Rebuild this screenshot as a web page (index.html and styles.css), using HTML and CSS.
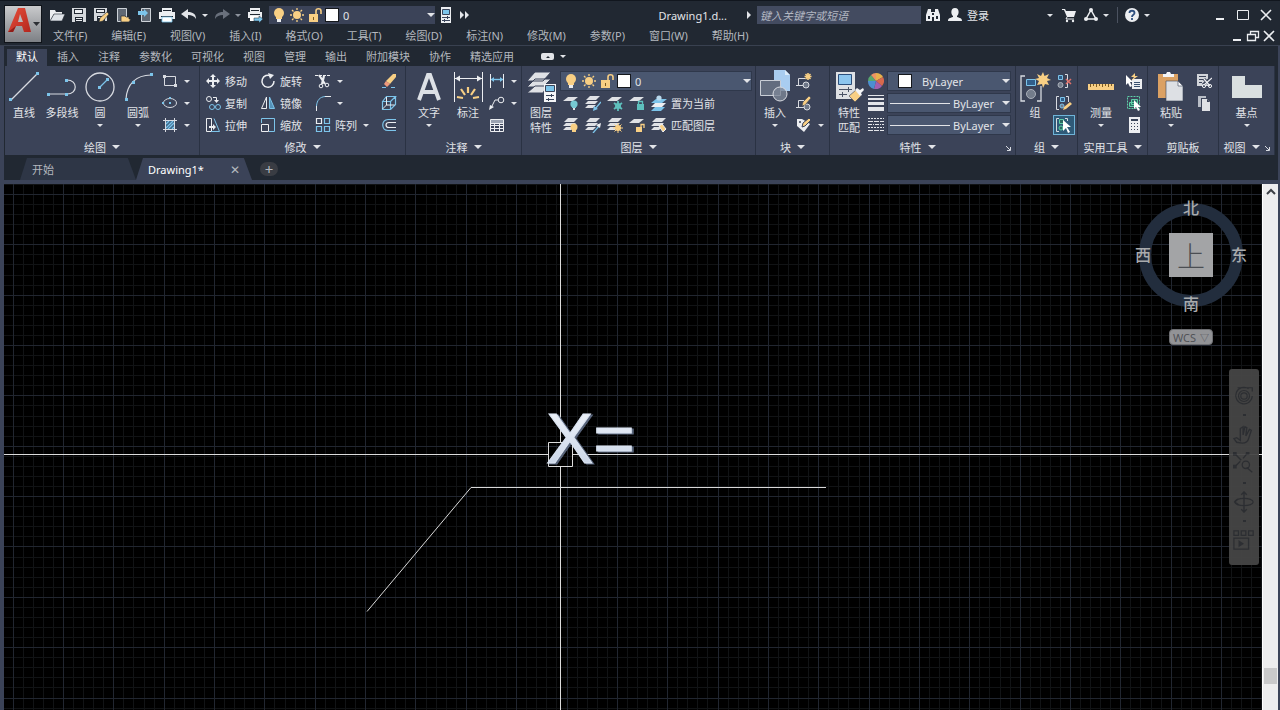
FILE: index.html
```html
<!DOCTYPE html>
<html lang="zh-CN">
<head>
    <meta charset="UTF-8">
    <meta name="viewport" content="width=device-width, initial-scale=1.0">
    <title>Drawing1.dwg</title>
    <link rel="stylesheet" href="styles.css">
</head>
<body>

    <!-- ICON SPRITE -->
    <svg class="sprite" aria-hidden="true">
        <defs>
            <linearGradient id="g-red" x1="0" y1="0" x2="1" y2="1">
                <stop offset="0" stop-color="#e8503c"/><stop offset="1" stop-color="#b3261e"/>
            </linearGradient>
            <linearGradient id="g-text" x1="0" y1="0" x2="0" y2="1">
                <stop offset="0" stop-color="#f4f7fc"/><stop offset="1" stop-color="#c3d0e4"/>
            </linearGradient>
        </defs>
        <symbol id="i-open" viewBox="0 0 16 16"><path fill="#eceef1" d="M1 14V3h5l1 2h6v2H5z"/><path fill="#dfe3e8" stroke="#222933" stroke-width=".6" d="M5 7h11l-3 7H1z"/></symbol>
        <symbol id="i-save" viewBox="0 0 16 16"><path fill="#d5d8dc" d="M1 1h14v14H1z"/><path fill="#222933" d="M3 2h9v5H3zM4 10h8v5H4z"/><path fill="#eceef1" d="M4 3h7v3H4zM5 11h6v1H5zM5 13h6v1H5z"/></symbol>
        <symbol id="i-saveas" viewBox="0 0 16 16"><path fill="#d5d8dc" d="M1 1h13v13H1z"/><path fill="#222933" d="M3 2h9v4H3zM4 9h8v5H4z"/><path fill="#eceef1" d="M4 3h7v2H4zM5 10h4v1H5z"/><path fill="#f8cf84" stroke="#222933" stroke-width=".6" d="M6 15l1-4 7-6 2 2-6 7z"/></symbol>
        <symbol id="i-webopen" viewBox="0 0 16 16"><path fill="#606873" stroke="#cdd2d8" d="M2.500 1.500h9v13h-9z"/><path fill="#f8cf84" stroke="#222933" stroke-width=".7" d="M6 15V9h4l1 1h3v2h2l-2 3z"/></symbol>
        <symbol id="i-websave" viewBox="0 0 16 16"><path fill="#606873" stroke="#cdd2d8" d="M4.500 1.500h9v13h-9z"/><path fill="#7cc4ea" d="M1 4h6V2l4 4-4 4V8H1z"/></symbol>
        <symbol id="i-print" viewBox="0 0 16 16"><path fill="#eceef1" d="M3 1h10v4H3zM0 5h16v7H0z"/><path fill="#222933" d="M2 9h12v1H2zM4 3h8v1H4z"/><path fill="#fff" stroke="#7cc4ea" stroke-width=".8" d="M3 10h10v5H3z"/></symbol>
        <symbol id="i-batch" viewBox="0 0 16 16"><path fill="#eceef1" d="M3 1h10v4H3zM1 5h14v6H1z"/><path fill="#222933" d="M3 7h10v1H3zM4 3h8v1H4z"/><path fill="#fff" d="M3 9h10v5H3z"/><path fill="#7cc4ea" stroke="#222933" stroke-width=".5" d="M7 11h5V9l4 3-4 4v-2H7z"/></symbol>
        <symbol id="i-undo" viewBox="0 0 16 16"><path fill="currentColor" d="M0 7l7-5v3c5 0 8 2 8 7-2-3-4-4-8-4v4z"/></symbol>
        <symbol id="i-redo" viewBox="0 0 16 16"><path fill="currentColor" d="M16 7L9 2v3c-5 0-8 2-8 7 2-3 4-4 8-4v4z"/></symbol>
        <symbol id="i-bulb" viewBox="0 0 16 16"><circle cx="8" cy="6" r="5" fill="#f8cf84"/><path fill="#f8cf84" d="M5 8h6v4H5z"/><path fill="#eceef1" d="M6 12h4v3H6z"/></symbol>
        <symbol id="i-sun" viewBox="0 0 16 16"><circle cx="8" cy="8" r="4" fill="#f8cf84"/><path stroke="#f8cf84" stroke-width="1.300" d="M8 1v2M8 13v2M1 8h2M13 8h2M3 3l1.500 1.500M11.500 11.500L13 13M13 3l-1.500 1.500M4.500 11.500L3 13"/></symbol>
        <symbol id="i-lock" viewBox="0 0 16 16"><path fill="#f8cf84" d="M2 7h9v8H2z"/><path fill="none" stroke="#f8cf84" stroke-width="1.600" d="M9 7V4c0-3 5-3 5 0v3"/><path stroke="#7a5a20" d="M6.500 10v3"/></symbol>
        <symbol id="i-sheet" viewBox="0 0 16 16"><path fill="#eceef1" d="M3 0h10v16H3z"/><path fill="#7cc4ea" stroke="#39445a" d="M4.500 2.500h7v5h-7z"/><path stroke="#39445a" d="M4 10.500h8M4 13.500h8M9.500 9v3M6.500 12v3"/></symbol>
        <symbol id="i-more" viewBox="0 0 16 16"><path fill="#e4e6ea" d="M3 4l4 4-4 4zM8 4l4 4-4 4z"/></symbol>
        <symbol id="i-find" viewBox="0 0 16 16"><path fill="#eceef1" d="M3 2h3v3h4V2h3l2 6v6H9v-4H7v4H1V8z"/><path fill="#222933" d="M3 9h2v3H3zM11 9h2v3h-2zM7 6h2v2H7z"/></symbol>
        <symbol id="i-user" viewBox="0 0 16 16"><path fill="#eceef1" d="M8 1c5 0 4 7 2 8v1c3 1 5 1 5 4H1c0-3 2-3 5-4V9C4 8 3 1 8 1z"/></symbol>
        <symbol id="i-cart" viewBox="0 0 16 16"><path fill="#eceef1" d="M1 2h3l1 2h10l-2 6H6L3 3H1z"/><path stroke="#eceef1" fill="none" d="M6 10l-1 2h8"/><circle cx="6" cy="14" r="1.200" fill="#eceef1"/><circle cx="12" cy="14" r="1.200" fill="#eceef1"/></symbol>
        <symbol id="i-a360" viewBox="0 0 16 16"><path fill="none" stroke="#eceef1" stroke-width="1.500" d="M8 3l5 9H3z"/><circle cx="8" cy="3" r="2" fill="#eceef1"/><circle cx="3" cy="12" r="2" fill="#eceef1"/><circle cx="13" cy="12" r="2" fill="#eceef1"/></symbol>
        <symbol id="i-help" viewBox="0 0 16 16"><circle cx="8" cy="8" r="7" fill="#eceef1"/><path fill="none" stroke="#2f5080" stroke-width="1.800" d="M5.500 6c0-3 5-3 5 0 0 2-2.500 1.500-2.500 4M8 11v2"/></symbol>
        <symbol id="i-min" viewBox="0 0 16 16"><path fill="#eceef1" d="M4 11h8v2H4z"/></symbol>
        <symbol id="i-max" viewBox="0 0 16 16"><path fill="none" stroke="#eceef1" d="M2.500 3.500h11v9h-11z"/></symbol>
        <symbol id="i-restore" viewBox="0 0 16 16"><path fill="none" stroke="#eceef1" stroke-width="1.300" d="M5.500 6V3.500h8v6H11M2.500 6.500h8v6h-8z"/></symbol>
        <symbol id="i-close" viewBox="0 0 16 16"><path stroke="#eceef1" stroke-width="1.600" d="M3 3l10 10M13 3L3 13"/></symbol>
        <symbol id="i-launch" viewBox="0 0 8 8"><path fill="none" stroke="#d8dbe1" d="M2 2l4 4M6.500 3v3.500H3"/></symbol>

        <!-- draw -->
        <symbol id="i-line" viewBox="0 0 32 32"><path stroke="#d8dbe1" stroke-width="1.200" d="M3 30L29 4"/><path fill="#7cc4ea" d="M1 28h3v3H1zM28 2h3v3h-3z"/></symbol>
        <symbol id="i-pline" viewBox="0 0 32 32"><path fill="none" stroke="#d8dbe1" stroke-width="1.200" d="M3 24h18c11 0 11-14 0-14"/><path fill="#7cc4ea" d="M1 23h3v3H1zM19 23h3v3h-3zM19 9h3v3h-3z"/></symbol>
        <symbol id="i-circle" viewBox="0 0 32 32"><circle cx="16" cy="17" r="14" fill="none" stroke="#d8dbe1" stroke-width="1.300"/><path stroke="#7cc4ea" stroke-width="1.300" d="M16 17l7-7"/><path fill="#7cc4ea" d="M14 16h3v3h-3zM22 8h3v3h-3z"/></symbol>
        <symbol id="i-arc" viewBox="0 0 32 32"><path fill="none" stroke="#d8dbe1" stroke-width="1.200" d="M4 29C5 14 14 5 29 5"/><path fill="#7cc4ea" d="M3 28h3v3H3zM10 11h3v3h-3zM28 3h3v3h-3z"/></symbol>
        <symbol id="i-rect" viewBox="0 0 16 16"><path fill="none" stroke="#d8dbe1" d="M2.500 3.500h11v9h-11z"/><path fill="#d8dbe1" d="M1 2h3v3H1zM12 11h3v3h-3z"/></symbol>
        <symbol id="i-ellipse" viewBox="0 0 16 16"><ellipse cx="8" cy="8" rx="6.500" ry="4.500" fill="none" stroke="#d8dbe1"/><path fill="#7cc4ea" d="M7 7h2v2H7zM7 2h2v2H7zM0 7h2v2H0z"/></symbol>
        <symbol id="i-hatch" viewBox="0 0 16 16"><path fill="#41698a" d="M4 4h8v8H4z"/><path stroke="#7cc4ea" stroke-width="1.200" d="M4 7l3-3M4 11l7-7M6 12l6-6M10 12l2-2"/><path fill="none" stroke="#d8dbe1" d="M3.500 1v14M12.500 1v14M1 3.500h14M1 12.500h14"/></symbol>

        <!-- modify -->
        <symbol id="i-move" viewBox="0 0 16 16"><path fill="#eceef1" d="M8 1l3 3H9v3h3V5l3 3-3 3V9H9v3h2l-3 3-3-3h2V9H4v2L1 8l3-3v2h3V4H5z"/></symbol>
        <symbol id="i-copy" viewBox="0 0 16 16"><circle cx="4" cy="4" r="2.500" fill="none" stroke="#eceef1"/><circle cx="7" cy="12" r="2.500" fill="none" stroke="#7cc4ea"/><circle cx="13" cy="12" r="2.500" fill="none" stroke="#7cc4ea"/><path fill="none" stroke="#eceef1" d="M8 2.500h3.500V6"/><path fill="#eceef1" d="M9 5h5l-2.500 3z"/></symbol>
        <symbol id="i-stretch" viewBox="0 0 16 16"><path fill="none" stroke="#eceef1" d="M1.500 1.500h5v13h-5z"/><path fill="none" stroke="#7cc4ea" d="M9 1.500l5.500 13H6"/><path fill="#eceef1" d="M4 9h4V7l3 3-3 3v-2H4z"/></symbol>
        <symbol id="i-rotate" viewBox="0 0 16 16"><path fill="none" stroke="#eceef1" stroke-width="1.500" d="M11 3a6 6 0 1 0 3 5"/><path fill="#eceef1" d="M8 0l6 2-4 4z"/></symbol>
        <symbol id="i-mirror" viewBox="0 0 16 16"><path fill="none" stroke="#eceef1" d="M6.500 2v11.500h-5z"/><path fill="#5591b8" stroke="#7cc4ea" d="M9.500 2v11.500h5z"/></symbol>
        <symbol id="i-scale" viewBox="0 0 16 16"><path fill="none" stroke="#7cc4ea" d="M1.500 6V1.500h13v13H9"/><path fill="none" stroke="#eceef1" d="M1.500 7.500h7v7h-7z"/></symbol>
        <symbol id="i-trim" viewBox="0 0 16 16"><path stroke="#eceef1" stroke-dasharray="3 1" d="M0 2.500h16"/><path stroke="#eceef1" stroke-width="2.200" d="M4 2l6 9M9 3L7 11"/><circle cx="6" cy="13" r="1.800" fill="none" stroke="#eceef1"/><circle cx="12" cy="12" r="1.800" fill="none" stroke="#eceef1"/></symbol>
        <symbol id="i-fillet" viewBox="0 0 16 16"><path fill="none" stroke="#7cc4ea" d="M1.500 11C2 5 5 2 10 1.500"/><path stroke="#eceef1" d="M1.500 11v5M10 1.500h6"/></symbol>
        <symbol id="i-array" viewBox="0 0 16 16"><path fill="none" stroke="#7cc4ea" stroke-width="1.200" d="M9.500 1.500h5v5h-5zM1.500 9.500h5v5h-5zM9.500 9.500h5v5h-5z"/><path fill="none" stroke="#eceef1" stroke-width="1.200" d="M1.500 1.500h5v5h-5z"/></symbol>
        <symbol id="i-erase" viewBox="0 0 16 16"><path fill="#f8cf84" d="M12 1h3v3l-6 7-4-3z"/><path fill="#ee9a7c" d="M5 8l4 3-3 3-3-3z"/><path stroke="#7cc4ea" d="M1 14.500h4M10 14.500h4"/></symbol>
        <symbol id="i-explode" viewBox="0 0 16 16"><path fill="none" stroke="#7cc4ea" stroke-width="1.200" d="M1.500 6.500h8v8h-8zM1.500 6.500l4-5h9l-5 5M14.500 1.500v8l-5 5"/><path fill="none" stroke="#eceef1" d="M5.500 2v8h8M5.500 10l-4 4"/></symbol>
        <symbol id="i-offset" viewBox="0 0 16 16"><path fill="none" stroke="#7cc4ea" stroke-width="1.200" d="M15 2.500H7c-7 0-7 11 0 11h8"/><path fill="none" stroke="#eceef1" stroke-width="1.200" d="M15 5.500H8c-4 0-4 5 0 5h7"/></symbol>

        <!-- annotate -->
        <symbol id="i-text" viewBox="0 0 32 32"><path fill="none" stroke="#dde1e6" stroke-width="4" d="M6 30L15 5h2l9 25M9 22h14"/></symbol>
        <symbol id="i-dim" viewBox="0 0 32 32"><path fill="none" stroke="#eceef1" d="M2.500 2v30M30.500 2v30M3 8.500h27"/><path fill="#eceef1" d="M3 8.500l5-3v6zM30 8.500l-5-3v6z"/><path stroke="#f8cf84" stroke-width="2.200" d="M16 17v6M9 19l4 6M23 19l-4 6M5 27l6 1M27 27l-6 1"/></symbol>
        <symbol id="i-linear" viewBox="0 0 16 16"><path stroke="#7cc4ea" stroke-width="1.400" d="M2 6.500h12"/><path stroke="#eceef1" d="M1.500 1v14M14.500 1v14"/><path fill="#7cc4ea" d="M2 6.500L5 4v5zM14 6.500L11 4v5z"/></symbol>
        <symbol id="i-leader" viewBox="0 0 16 16"><circle cx="12" cy="5" r="2.800" fill="none" stroke="#eceef1"/><path fill="none" stroke="#eceef1" d="M9 5H6l-4 8"/><path fill="#eceef1" d="M0 15l1-5 4 2z"/></symbol>
        <symbol id="i-table" viewBox="0 0 16 16"><path fill="none" stroke="#eceef1" d="M1.500 2.500h13v12h-13zM1 6.500h14M1 8.500h14M1 11.500h14M5.500 6v8M10.500 6v8"/><path fill="#9aa2b0" d="M2 3h12v3H2z"/></symbol>

        <!-- layers -->
        <symbol id="i-layerprop" viewBox="0 0 32 32"><path fill="#dfe1e5" d="M10 2h16l-8 9H2zM10 9h16l-8 8H2z" stroke="#3b4358"/><path fill="#dfe1e5" stroke="#3b4358" d="M10 16h12l-4 7H2z"/><path fill="#f4f5f7" d="M19 14h12v18H19z"/><path fill="#7cc4ea" stroke="#39445a" d="M20.500 15.500h9v6h-9z"/><path stroke="#39445a" d="M21 25.500h8M21 29.500h8M26.500 24v3M23.500 28v3"/></symbol>
        <symbol id="i-l1" viewBox="0 0 16 16"><path fill="#dfe1e5" d="M5 2h10l-5 4H0z"/></symbol>
        <symbol id="i-l3" viewBox="0 0 16 16"><path fill="#dfe1e5" d="M5 1h10l-4 4H1zM3 6h10l-3 3H0zM3 10h8l-3 3H0z"/></symbol>
        <symbol id="i-loff" viewBox="0 0 16 16"><use href="#i-l1"/><circle cx="11" cy="9" r="3.600" fill="#76c9d3"/><path fill="#76c9d3" d="M9 11h4v2H9z"/><path fill="#dfe1e5" d="M10 13h2v2h-2z"/></symbol>
        <symbol id="i-liso" viewBox="0 0 16 16"><use href="#i-l3"/><path stroke="#7cc4ea" stroke-width="1.300" d="M16 7l-6 7"/><path fill="#7cc4ea" d="M8 16l1-5 4 3z"/></symbol>
        <symbol id="i-lfrz" viewBox="0 0 16 16"><use href="#i-l1"/><path stroke="#5ec0bd" stroke-width="1.800" d="M11 6v10M7 8l8 6M15 8l-8 6"/><circle cx="11" cy="11" r="3" fill="#5ec0bd"/></symbol>
        <symbol id="i-llck" viewBox="0 0 16 16"><use href="#i-l1"/><path fill="#5ec0bd" d="M8 9h7v6H8z"/><path fill="none" stroke="#5ec0bd" stroke-width="1.300" d="M9.500 9V6.500h4V9"/></symbol>
        <symbol id="i-lcur" viewBox="0 0 16 16"><path fill="#7cc4ea" d="M5 4h11l-5 4H0zM4 12h10l-4 4H0z"/><path fill="#eceef1" d="M4 8h11l-4 4H0z"/><circle cx="8" cy="3" r="2.600" fill="#b9d8ec"/></symbol>
        <symbol id="i-lon" viewBox="0 0 16 16"><use href="#i-l3"/><circle cx="11" cy="10" r="3.500" fill="#f8cf84"/><path fill="#f8cf84" d="M9 12h4v3H9z"/></symbol>
        <symbol id="i-luniso" viewBox="0 0 16 16"><use href="#i-l3"/><path stroke="#7cc4ea" stroke-width="1.300" d="M8 16l6-7"/><path fill="#eceef1" d="M16 6l-1 5-4-3z"/></symbol>
        <symbol id="i-lthw" viewBox="0 0 16 16"><use href="#i-l3"/><circle cx="11" cy="11" r="3" fill="#f8cf84"/><path stroke="#f8cf84" d="M11 6v10M6 11h10M7.500 7.500l7 7M14.500 7.500l-7 7"/></symbol>
        <symbol id="i-lulk" viewBox="0 0 16 16"><use href="#i-l1"/><path fill="#f8cf84" d="M7 10h6v5H7z"/><path fill="none" stroke="#f8cf84" stroke-width="1.300" d="M12 10V7.500h3V11"/></symbol>
        <symbol id="i-lmch" viewBox="0 0 16 16"><use href="#i-l3"/><path fill="#f8cf84" stroke="#eceef1" d="M8 9l3-2 4 5-3 3z"/></symbol>

        <!-- block -->
        <symbol id="i-insert" viewBox="0 0 32 32"><path fill="#a9cdf0" d="M15 0h11l5 5v16H15z"/><path fill="#dcecfa" d="M26 0v5h5z"/><path fill="#626c7e" stroke="#c9ced6" d="M1.500 10.500h20v15h-20z"/><circle cx="21" cy="24" r="7" fill="#7c8696" fill-opacity=".8" stroke="#d8dbe1"/></symbol>
        <symbol id="i-bnew" viewBox="0 0 16 16"><path fill="none" stroke="#d8dbe1" d="M9 5.500H2.500v7H10M0 12.500h3"/><circle cx="10" cy="12" r="3" fill="#6d7687" stroke="#d8dbe1"/><path stroke="#f8cf84" stroke-width="1.600" d="M12 0v7M8.500 3.500h7M9.500 1l5 5M14.500 1l-5 5"/></symbol>
        <symbol id="i-bedit" viewBox="0 0 16 16"><path fill="none" stroke="#d8dbe1" d="M8 5.500H2.500v7H10M0 12.500h3"/><circle cx="11" cy="12" r="3" fill="#6d7687" stroke="#d8dbe1"/><path fill="#f8cf84" stroke="#3b4358" stroke-width=".6" d="M6 11l1-4 6-6 2 2-6 7z"/></symbol>
        <symbol id="i-battr" viewBox="0 0 16 16"><path fill="#eceef1" d="M1 2h5l8 5-6 8-7-6z"/><path fill="#f8cf84" stroke="#3b4358" d="M6 10l1-4 6-5 2 2-6 6z"/><circle cx="4" cy="5" r="1" fill="#3b4358"/></symbol>

        <!-- properties -->
        <symbol id="i-match" viewBox="0 0 32 32"><path fill="#dfe1e5" d="M3 2h19v27H3z"/><path fill="#8dc6ef" stroke="#2c4f7c" d="M5.500 4.500h13v10h-13z"/><path stroke="#4b5365" d="M6 19.500h13M6 24.500h8M15.500 17v5M9.500 22v5"/><path fill="#f8cf84" stroke="#3b4358" stroke-width=".6" d="M16 26l7-6 5 6-6 6z"/><path fill="#f4f5f7" d="M22 20l2-2 3 2 3-2 1 2-3 3 1 2-2 1z"/></symbol>
        <symbol id="i-wheel" viewBox="0 0 16 16"><path fill="#e8b04c" d="M8 8V0a8 8 0 0 1 7 4z"/><path fill="#d7694d" d="M8 8l7-4a8 8 0 0 1-1 9z"/><path fill="#a35fae" d="M8 8l6 5a8 8 0 0 1-8 3z"/><path fill="#4c8fd0" d="M8 8l-2 8a8 8 0 0 1-6-8z"/><path fill="#58a86e" d="M8 8H0a8 8 0 0 1 3-6z"/><path fill="#ee9463" d="M8 8L3 2a8 8 0 0 1 5-2z"/></symbol>
        <symbol id="i-weight" viewBox="0 0 16 16"><path fill="#e4e6ea" d="M0 0h16v1H0zM0 3h16v2H0zM0 7h16v3H0zM0 12h16v4H0z"/></symbol>
        <symbol id="i-ltype" viewBox="0 0 16 16"><path stroke="#e4e6ea" stroke-dasharray="2 1" d="M0 1.500h16M0 10.500h16"/><path stroke="#e4e6ea" stroke-dasharray="5 1" d="M0 4.500h16M0 13.500h16"/><path stroke="#e4e6ea" stroke-dasharray="4 1 1 1" d="M0 7.500h16"/></symbol>

        <!-- group -->
        <symbol id="i-group" viewBox="0 0 32 32"><path fill="none" stroke="#d8dbe1" stroke-width="1.300" d="M6 6H2v25h4M18 31h4V16"/><path fill="#315f8b" stroke="#7cc4ea" d="M7.500 9.500h9v6h-9z"/><circle cx="12" cy="24" r="4.500" fill="#737c8b" stroke="#aab0ba"/><path fill="#f8cf84" d="M24 2l1.500 4L30 4l-2 4 4 2-4 1 2 4-4-1-2 4-1-4-5 1 2-4-4-2 4-1-2-4 4 2z"/></symbol>
        <symbol id="i-ungroup" viewBox="0 0 16 16"><path fill="#315f8b" stroke="#7cc4ea" d="M2.500 2.500h4v4h-4z"/><circle cx="4.500" cy="12" r="2.500" fill="#737c8b" stroke="#aab0ba"/><path fill="none" stroke="#d8dbe1" d="M9 1.500h2.500v13H9"/><path stroke="#e0716a" stroke-width="1.500" d="M10 6l5 5M15 6l-5 5"/></symbol>
        <symbol id="i-gedit" viewBox="0 0 16 16"><path fill="none" stroke="#d8dbe1" d="M3 1.500H.5v13H3M10 1.500h2.500V7"/><path fill="#315f8b" stroke="#7cc4ea" d="M4.500 2.500h4v4h-4z"/><circle cx="6" cy="11" r="2" fill="#737c8b" stroke="#7cc4ea"/><path fill="#f8cf84" d="M7 15l1-3 6-5 2 2-6 5z"/></symbol>
        <symbol id="i-gsel" viewBox="0 0 16 16"><path fill="none" stroke="#d8dbe1" d="M3 1.500H.5v13H3M9 1.500h2.500V4"/><path fill="#2b6a62" stroke="#5fd0a8" d="M3.500 2.500h4v4h-4z"/><circle cx="5" cy="11" r="2" fill="#2b6a62" stroke="#5fd0a8"/><path fill="#fff" d="M7 3l8 7h-4l3 5-2 1-2-5-3 3z"/></symbol>

        <!-- utilities -->
        <symbol id="i-ruler" viewBox="0 0 32 32"><path fill="#f8cf84" d="M3 14h26v6H3z"/><path stroke="#7d5c22" d="M5.500 14v3M8.500 14v2M11.500 14v3M14.500 14v2M17.500 14v3M20.500 14v2M23.500 14v3M26.500 14v2"/></symbol>
        <symbol id="i-qsel" viewBox="0 0 16 16"><path fill="#eceef1" d="M6 6h10v10H6z"/><path stroke="#39506f" d="M8 9.500h6M8 11.500h6M8 13.500h6"/><path fill="#f8cf84" d="M9 0L5 4h3L5 8l7-5H9z"/><path fill="#fff" d="M0 2l7 7H4l2 4-2 1-2-4-2 2z"/></symbol>
        <symbol id="i-selall" viewBox="0 0 16 16"><path fill="none" stroke="#5fd0a8" stroke-dasharray="2 1" d="M1.500 1.500h12v12h-12z"/><path fill="#2b7568" stroke="#5fd0a8" d="M5.500 4.500h6v5h-6zM3.500 7.500h5v4h-5z"/><path fill="#fff" d="M8 5l7 7h-3l2 3-2 1-2-4-2 2z"/></symbol>
        <symbol id="i-calc" viewBox="0 0 16 16"><path fill="#eceef1" d="M3 0h11v16H3z"/><path fill="#39445a" d="M5 2h7v2H5zM5 6h1v1H5zM8 6h1v1H8zM11 6h1v1h-1zM5 9h1v1H5zM8 9h1v1H8zM11 9h1v1h-1zM5 12h1v1H5zM8 12h1v1H8zM11 12h1v1h-1z"/></symbol>

        <!-- clipboard, view -->
        <symbol id="i-paste" viewBox="0 0 32 32"><path fill="#dba163" d="M3 4h20v24H3z"/><path fill="#f4f5f7" d="M8 4h3l1-2h3l1 2h3v3H8z"/><path fill="#dde0e4" stroke="#3b4358" stroke-width=".6" d="M11 11h12l5 5v15H11z"/><path fill="#f8f9fb" stroke="#3b4358" stroke-width=".6" d="M23 11v5h5z"/></symbol>
        <symbol id="i-cut" viewBox="0 0 16 16"><path fill="#d2d5da" d="M1 1h11v12H1z"/><path stroke="#3b4358" d="M3 3.500h7M3 6.500h5M3 9.500h3"/><path stroke="#3b4358" stroke-width="3" d="M15 5l-8 7M8 6l7 7"/><path stroke="#eceef1" stroke-width="1.200" d="M16 5l-8 7M8 6l6 7"/><circle cx="8" cy="13" r="1.600" fill="none" stroke="#eceef1"/><circle cx="14" cy="13" r="1.600" fill="none" stroke="#eceef1"/></symbol>
        <symbol id="i-clip" viewBox="0 0 16 16"><path fill="#b9bec7" d="M2 1h8v2H5v9H2z"/><path fill="#dfe1e5" d="M6 4h5l3 3v9H6z"/><path fill="#3b4358" d="M11 4v3h3z"/></symbol>
        <symbol id="i-base" viewBox="0 0 32 32"><path fill="#d9dfe0" d="M1 6h13v9h17v13H1z"/></symbol>

        <!-- navigation bar -->
        <symbol id="i-wheelnav" viewBox="0 0 24 24"><path fill="none" stroke="#2f3135" stroke-width="1.300" d="M5 3h16v4M21 12a9 9 0 1 1-4-8"/><circle cx="12" cy="12" r="6" fill="none" stroke="#2f3135" stroke-width="1.300"/><circle cx="12" cy="12" r="3.500" fill="none" stroke="#2f3135" stroke-width="1.300"/></symbol>
        <symbol id="i-pan" viewBox="0 0 24 24"><path fill="none" stroke="#2f3135" stroke-width="1.500" d="M4 21l-3-4 3-1 4 3V6l3-2v9l2-9 2 1-1 9 4-7 2 1-3 9c-1 4-3 5-7 5z"/></symbol>
        <symbol id="i-zoomnav" viewBox="0 0 24 24"><path fill="none" stroke="#2f3135" stroke-width="1.500" d="M2 2l7 7M2 16l6-6M16 1l-5 6M15 17l6 5"/><circle cx="14" cy="14" r="4" fill="none" stroke="#2f3135" stroke-width="1.400"/><path fill="#2f3135" d="M0 0h4v4H0zM0 14h4v4H0zM14 0h4v3h-4z"/></symbol>
        <symbol id="i-orbit" viewBox="0 0 24 24"><ellipse cx="12" cy="12" rx="10" ry="4" fill="none" stroke="#2f3135" stroke-width="1.300"/><path fill="none" stroke="#2f3135" stroke-width="1.500" d="M12 1v22M9 4l3-3 3 3M9 20l3 3 3-3M5 9l-3 3 4 3"/></symbol>
        <symbol id="i-motion" viewBox="0 0 24 24"><path fill="none" stroke="#2f3135" stroke-width="1.400" d="M1 2h5v5H1zM9 2h5v5H9zM17 2h5v5h-5zM1 10h16v12H1z"/><path fill="#2f3135" d="M6 12l6 4-6 4z"/></symbol>
    </svg>

    <header class="header">
        <button class="app-btn" aria-label="应用程序菜单">
            <svg viewBox="0 0 36 36">
                <path fill="url(#g-red)" d="M3 26L13 2h7l6 24h-7l-2-6h-6l-3 6z"/>
                <path fill="#8f1c18" d="M3 26l8-6-3 6z"/>
                <path fill="#b9bbbe" d="M15 8l3 8h-5z"/>
                <path fill="#2c2f34" d="M28 16h7l-3.500 4z"/>
            </svg>
        </button>

        <div class="title-row">
            <div class="quick">
                <button aria-label="打开"><svg class="ico"><use href="#i-open"/></svg></button>
                <button aria-label="保存"><svg class="ico"><use href="#i-save"/></svg></button>
                <button aria-label="另存为"><svg class="ico"><use href="#i-saveas"/></svg></button>
                <button aria-label="从 Web 打开"><svg class="ico"><use href="#i-webopen"/></svg></button>
                <button aria-label="保存到 Web"><svg class="ico"><use href="#i-websave"/></svg></button>
                <button aria-label="打印"><svg class="ico"><use href="#i-print"/></svg></button>
                <button class="split" aria-label="放弃"><svg class="ico"><use href="#i-undo"/></svg><i class="caret"></i></button>
                <button class="split dim" aria-label="重做"><svg class="ico"><use href="#i-redo"/></svg><i class="caret"></i></button>
                <button aria-label="批处理打印"><svg class="ico"><use href="#i-batch"/></svg></button>
            </div>
            <div class="combo combo-title">
                <svg class="ico"><use href="#i-bulb"/></svg>
                <svg class="ico"><use href="#i-sun"/></svg>
                <svg class="ico"><use href="#i-lock"/></svg>
                <span class="swatch"></span>
                <select aria-label="图层"><option>0</option></select>
            </div>
            <button class="after-combo" aria-label="图纸集"><svg class="ico"><use href="#i-sheet"/></svg></button>
            <button aria-label="更多"><svg class="ico"><use href="#i-more"/></svg></button>

            <h1 class="doc-title">Drawing1.d...</h1>
            <i class="caret-right"></i>
            <input class="search" type="text" placeholder="键入关键字或短语" aria-label="搜索">
            <button class="find" aria-label="查找"><svg class="ico"><use href="#i-find"/></svg></button>
            <button class="login"><svg class="ico"><use href="#i-user"/></svg><span>登录</span><i class="caret"></i></button>
            <button aria-label="购物车"><svg class="ico"><use href="#i-cart"/></svg></button>
            <button class="split" aria-label="应用"><svg class="ico"><use href="#i-a360"/></svg><i class="caret"></i></button>
            <span class="sep"></span>
            <button class="split" aria-label="帮助"><svg class="ico"><use href="#i-help"/></svg><i class="caret"></i></button>
            <div class="win-btns">
                <button aria-label="最小化"><svg class="ico"><use href="#i-min"/></svg></button>
                <button aria-label="最大化"><svg class="ico"><use href="#i-max"/></svg></button>
                <button aria-label="关闭"><svg class="ico"><use href="#i-close"/></svg></button>
            </div>
        </div>

        <nav class="menu-row">
            <a href="#">文件(F)</a>
            <a href="#">编辑(E)</a>
            <a href="#">视图(V)</a>
            <a href="#">插入(I)</a>
            <a href="#">格式(O)</a>
            <a href="#">工具(T)</a>
            <a href="#">绘图(D)</a>
            <a href="#">标注(N)</a>
            <a href="#">修改(M)</a>
            <a href="#">参数(P)</a>
            <a href="#">窗口(W)</a>
            <a href="#">帮助(H)</a>
            <div class="doc-btns">
                <button aria-label="最小化图形"><svg class="ico"><use href="#i-min"/></svg></button>
                <button aria-label="还原图形"><svg class="ico"><use href="#i-restore"/></svg></button>
                <button aria-label="关闭图形"><svg class="ico"><use href="#i-close"/></svg></button>
            </div>
        </nav>
    </header>

    <main class="frame">
        <div class="tabs">
            <button class="active">默认</button>
            <button>插入</button>
            <button>注释</button>
            <button>参数化</button>
            <button>可视化</button>
            <button>视图</button>
            <button>管理</button>
            <button>输出</button>
            <button>附加模块</button>
            <button>协作</button>
            <button>精选应用</button>
            <button class="tab-toggle" aria-label="最小化功能区"><span class="pill"></span><i class="caret"></i></button>
        </div>

        <div class="ribbon">
            <section class="panel">
                <div class="panel-body">
                    <button class="big"><svg class="ico-lg"><use href="#i-line"/></svg>直线</button>
                    <button class="big"><svg class="ico-lg"><use href="#i-pline"/></svg>多段线</button>
                    <button class="big"><svg class="ico-lg"><use href="#i-circle"/></svg>圆<i class="caret"></i></button>
                    <button class="big"><svg class="ico-lg"><use href="#i-arc"/></svg>圆弧<i class="caret"></i></button>
                    <div class="col">
                        <button class="small" aria-label="矩形"><svg class="ico"><use href="#i-rect"/></svg><i class="caret"></i></button>
                        <button class="small" aria-label="椭圆"><svg class="ico"><use href="#i-ellipse"/></svg><i class="caret"></i></button>
                        <button class="small" aria-label="图案填充"><svg class="ico"><use href="#i-hatch"/></svg><i class="caret"></i></button>
                    </div>
                </div>
                <h2>绘图<i class="caret lg"></i></h2>
            </section>

            <section class="panel">
                <div class="panel-body modify">
                    <button class="small"><svg class="ico"><use href="#i-move"/></svg>移动</button>
                    <button class="small"><svg class="ico"><use href="#i-rotate"/></svg>旋转</button>
                    <button class="small" aria-label="修剪"><svg class="ico"><use href="#i-trim"/></svg><i class="caret"></i></button>
                    <button class="small" aria-label="删除"><svg class="ico"><use href="#i-erase"/></svg></button>
                    <button class="small"><svg class="ico"><use href="#i-copy"/></svg>复制</button>
                    <button class="small"><svg class="ico"><use href="#i-mirror"/></svg>镜像</button>
                    <button class="small" aria-label="圆角"><svg class="ico"><use href="#i-fillet"/></svg><i class="caret"></i></button>
                    <button class="small" aria-label="分解"><svg class="ico"><use href="#i-explode"/></svg></button>
                    <button class="small"><svg class="ico"><use href="#i-stretch"/></svg>拉伸</button>
                    <button class="small"><svg class="ico"><use href="#i-scale"/></svg>缩放</button>
                    <button class="small"><svg class="ico"><use href="#i-array"/></svg>阵列<i class="caret"></i></button>
                    <button class="small" aria-label="偏移"><svg class="ico"><use href="#i-offset"/></svg></button>
                </div>
                <h2>修改<i class="caret lg"></i></h2>
            </section>

            <section class="panel">
                <div class="panel-body">
                    <button class="big wide"><svg class="ico-lg"><use href="#i-text"/></svg>文字<i class="caret"></i></button>
                    <button class="big narrow"><svg class="ico-lg"><use href="#i-dim"/></svg>标注</button>
                    <div class="col">
                        <button class="small" aria-label="线性"><svg class="ico"><use href="#i-linear"/></svg><i class="caret"></i></button>
                        <button class="small" aria-label="引线"><svg class="ico"><use href="#i-leader"/></svg><i class="caret"></i></button>
                        <button class="small" aria-label="表格"><svg class="ico"><use href="#i-table"/></svg></button>
                    </div>
                </div>
                <h2>注释<i class="caret lg"></i></h2>
            </section>

            <section class="panel">
                <div class="panel-body">
                    <button class="big"><svg class="ico-lg"><use href="#i-layerprop"/></svg>图层<br>特性</button>
                    <div class="layers">
                        <div class="combo">
                            <svg class="ico"><use href="#i-bulb"/></svg>
                            <svg class="ico"><use href="#i-sun"/></svg>
                            <svg class="ico"><use href="#i-lock"/></svg>
                            <span class="swatch"></span>
                            <select aria-label="当前图层"><option>0</option></select>
                        </div>
                        <div class="tool-row">
                            <button class="small" aria-label="关闭图层"><svg class="ico"><use href="#i-loff"/></svg></button>
                            <button class="small" aria-label="隔离"><svg class="ico"><use href="#i-liso"/></svg></button>
                            <button class="small" aria-label="冻结"><svg class="ico"><use href="#i-lfrz"/></svg></button>
                            <button class="small" aria-label="锁定"><svg class="ico"><use href="#i-llck"/></svg></button>
                            <button class="small"><svg class="ico"><use href="#i-lcur"/></svg>置为当前</button>
                        </div>
                        <div class="tool-row">
                            <button class="small" aria-label="打开所有图层"><svg class="ico"><use href="#i-lon"/></svg></button>
                            <button class="small" aria-label="取消隔离"><svg class="ico"><use href="#i-luniso"/></svg></button>
                            <button class="small" aria-label="解冻"><svg class="ico"><use href="#i-lthw"/></svg></button>
                            <button class="small" aria-label="解锁"><svg class="ico"><use href="#i-lulk"/></svg></button>
                            <button class="small"><svg class="ico"><use href="#i-lmch"/></svg>匹配图层</button>
                        </div>
                    </div>
                </div>
                <h2>图层<i class="caret lg"></i></h2>
            </section>

            <section class="panel">
                <div class="panel-body">
                    <button class="big"><svg class="ico-lg"><use href="#i-insert"/></svg>插入<i class="caret"></i></button>
                    <div class="col tight">
                        <button class="small" aria-label="创建块"><svg class="ico"><use href="#i-bnew"/></svg></button>
                        <button class="small" aria-label="编辑块"><svg class="ico"><use href="#i-bedit"/></svg></button>
                        <button class="small" aria-label="编辑属性"><svg class="ico"><use href="#i-battr"/></svg><i class="caret"></i></button>
                    </div>
                </div>
                <h2>块<i class="caret lg"></i></h2>
            </section>

            <section class="panel">
                <div class="panel-body">
                    <button class="big"><svg class="ico-lg"><use href="#i-match"/></svg>特性<br>匹配</button>
                    <div class="props">
                        <div class="prop">
                            <svg class="ico"><use href="#i-wheel"/></svg>
                            <div class="combo"><span class="swatch"></span><select aria-label="对象颜色"><option>ByLayer</option></select></div>
                        </div>
                        <div class="prop">
                            <svg class="ico"><use href="#i-weight"/></svg>
                            <div class="combo"><span class="line"></span><select aria-label="线宽"><option>ByLayer</option></select></div>
                        </div>
                        <div class="prop">
                            <svg class="ico"><use href="#i-ltype"/></svg>
                            <div class="combo"><span class="line"></span><select aria-label="线型"><option>ByLayer</option></select></div>
                        </div>
                    </div>
                </div>
                <h2 class="has-launch">特性<i class="caret lg"></i><button class="launch" aria-label="特性选项板"><svg><use href="#i-launch"/></svg></button></h2>
            </section>

            <section class="panel">
                <div class="panel-body">
                    <button class="big"><svg class="ico-lg"><use href="#i-group"/></svg>组</button>
                    <div class="col tight">
                        <button class="small" aria-label="解除编组"><svg class="ico"><use href="#i-ungroup"/></svg></button>
                        <button class="small" aria-label="组编辑"><svg class="ico"><use href="#i-gedit"/></svg></button>
                        <button class="small on" aria-label="启用组选择"><svg class="ico"><use href="#i-gsel"/></svg></button>
                    </div>
                </div>
                <h2>组<i class="caret lg"></i></h2>
            </section>

            <section class="panel">
                <div class="panel-body">
                    <button class="big wide"><svg class="ico-lg"><use href="#i-ruler"/></svg>测量<i class="caret"></i></button>
                    <div class="col tight">
                        <button class="small" aria-label="快速选择"><svg class="ico"><use href="#i-qsel"/></svg></button>
                        <button class="small" aria-label="全部选择"><svg class="ico"><use href="#i-selall"/></svg></button>
                        <button class="small" aria-label="快速计算器"><svg class="ico"><use href="#i-calc"/></svg></button>
                    </div>
                </div>
                <h2>实用工具<i class="caret lg"></i></h2>
            </section>

            <section class="panel">
                <div class="panel-body">
                    <button class="big wide"><svg class="ico-lg"><use href="#i-paste"/></svg>粘贴<i class="caret"></i></button>
                    <div class="col tight">
                        <button class="small" aria-label="剪切"><svg class="ico"><use href="#i-cut"/></svg></button>
                        <button class="small" aria-label="复制剪裁"><svg class="ico"><use href="#i-clip"/></svg></button>
                    </div>
                </div>
                <h2>剪贴板</h2>
            </section>

            <section class="panel">
                <div class="panel-body center">
                    <button class="big"><svg class="ico-lg"><use href="#i-base"/></svg>基点<i class="caret"></i></button>
                </div>
                <h2 class="has-launch">视图<i class="caret lg"></i><button class="launch" aria-label="视图选项"><svg><use href="#i-launch"/></svg></button></h2>
            </section>
        </div>

        <div class="doc-tabs">
            <button class="doc-tab">开始</button>
            <div class="doc-tab active"><a href="#">Drawing1*</a><button aria-label="关闭 Drawing1">✕</button></div>
            <button class="add-tab" aria-label="新图形">+</button>
        </div>

        <div class="workspace">
            <div class="canvas">
                <svg class="drawing" id="drawing">
                    <g id="grid"></g>
                    <g class="crosshair">
                        <path d="M556.500 0V258M556.500 283V2000M0 270.500H544M569 270.500H4000"/>
                        <path d="M544.500 258.500h24v24h-24z"/>
                    </g>
                    <path class="entity" d="M363 427.500L467 303.500H822"/>
                    <text class="label-shadow" x="544" y="280">X=</text>
                    <text class="label" x="542" y="279" fill="url(#g-text)">X=</text>
                </svg>

                <div class="cube">
                    <span class="north">北</span>
                    <span class="west">西</span>
                    <button class="face">上</button>
                    <span class="east">东</span>
                    <span class="south">南</span>
                </div>
                <button class="wcs">WCS<span>▽</span></button>

                <div class="navbar">
                    <button aria-label="全导航控制盘"><svg><use href="#i-wheelnav"/></svg></button>
                    <i class="dot"></i>
                    <button aria-label="平移"><svg><use href="#i-pan"/></svg></button>
                    <button aria-label="缩放"><svg><use href="#i-zoomnav"/></svg></button>
                    <i class="dot"></i>
                    <button aria-label="动态观察"><svg><use href="#i-orbit"/></svg></button>
                    <i class="dot"></i>
                    <button aria-label="ShowMotion"><svg><use href="#i-motion"/></svg></button>
                </div>
            </div>

            <div class="scrollbar">
                <button aria-label="向上滚动"><svg viewBox="0 0 10 10"><path fill="none" stroke="#3c3f45" stroke-width="2" d="M1 7l4-4 4 4"/></svg></button>
                <div class="thumb"></div>
            </div>
        </div>
    </main>

    <script src="script.js"></script>
</body>
</html>
```

FILE: styles.css
```css
:root { --bg: #212832; --panel: #3b4358; --field: #4a5770; --edge: #2a3243; --text: #e2e4e8; --muted: #b4b8bf; }

* { box-sizing: border-box; }
body {
    margin: 0;
    height: 100vh;
    display: flex;
    flex-direction: column;
    overflow: hidden;
    background: var(--bg);
    color: var(--text);
    font: 11px/15px 'Noto Sans', 'Noto Sans CJK SC', sans-serif;
}
button, input, select { font: inherit; color: inherit; }
button { background: none; border: 0; padding: 0; display: flex; align-items: center; white-space: nowrap; cursor: pointer; }
a { color: inherit; text-decoration: none; }
h1, h2 { margin: 0; font: inherit; }
svg { display: block; flex: none; }

.sprite { position: absolute; width: 0; height: 0; }
.ico { width: 16px; height: 16px; }
.ico-lg { width: 32px; height: 32px; }

.caret { border: 3px solid transparent; border-top: 3px solid var(--text); border-bottom: 0; }
.caret.lg { border-width: 4px 4px 0; }
.caret-right { border: 4px solid transparent; border-left-color: var(--text); border-right: 0; }

/* HEADER */
.header {
    display: grid;
    grid-template-columns: 38px 1fr;
    grid-template-rows: 24px 17px;
    column-gap: 7px;
    padding: 2px 3px 1px 4px;
    border-top: 1px solid #11161e;
    border-bottom: 1px solid #394150;
}
.app-btn {
    grid-row: span 2;
    align-self: center;
    height: 38px;
    justify-content: center;
    background: linear-gradient(#c9cacc, #7d8085);
    border: 1px solid #0f1319;
}
.app-btn svg { width: 36px; height: 36px; }

.title-row { display: flex; align-items: center; min-width: 0; }
.quick { display: flex; gap: 6px; }
.split { gap: 5px; }
.split.dim { color: #69707c; }
.dim .caret { border-top-color: #8d939d; }

.combo { display: flex; align-items: center; height: 20px; background: var(--field); border: 1px solid #2f384b; padding-left: 2px; }
.combo select {
    flex: 1;
    min-width: 0;
    height: 100%;
    padding: 0 4px;
    border: 0;
    appearance: none;
    background: transparent;
    outline: 0;
}
.combo::after { content: ""; border: 4px solid transparent; border-top-color: var(--text); border-bottom: 0; margin-left: 3px; }
.swatch { width: 14px; height: 14px; flex: none; background: #fff; border: 1px solid #15181d; }
.combo .ico { margin-right: 2px; }
.combo-title { width: 166px; height: 18px; margin-left: 6px; background: var(--panel); border: 0; }
.after-combo { margin: 0 3px; }

.doc-title { margin-left: auto; }
.caret-right { margin: 0 6px 0 20px; }
.search { width: 164px; height: 18px; padding: 0 3px; border: 0; background: #434b60; outline: 0; font-style: italic; }
.search::placeholder { color: #b2b7c2; }
.find { margin: 0 6px 0 4px; }
.login { width: 106px; gap: 4px; margin-right: 8px; }
.login .caret { margin-left: auto; }
.title-row > .split { margin-left: 6px; gap: 4px; }
.sep { width: 1px; height: 16px; margin-left: 8px; background: #4b5260; }
.win-btns { display: flex; gap: 7px; margin: 0 3px 0 62px; }

.menu-row { display: flex; align-items: center; gap: 24px; padding-left: 4px; color: var(--muted); }
.doc-btns { display: flex; margin-left: auto; }

/* RIBBON TABS */
.frame { flex: 1; min-height: 0; display: flex; flex-direction: column; border: solid var(--panel); border-width: 0 2px 0 4px; }
.tabs { display: flex; gap: 1px; height: 20px; padding: 3px 0 0 3px; color: var(--muted); }
.tabs button { padding: 0 9px 2px; }
.tabs .active { background: var(--panel); color: #fff; }
.tabs .tab-toggle { margin-left: 8px; gap: 6px; }
.pill { width: 13px; height: 7px; border-radius: 2px; background: var(--text); display: flex; justify-content: center; align-items: center; }
.pill::after { content: ""; border: 2px solid transparent; border-bottom-color: var(--bg); border-top: 0; }

/* RIBBON */
.ribbon {
    display: grid;
    grid-template-columns: 195fr 206fr 116fr 234fr 74fr 186fr 62fr 70fr 71fr 56fr;
    padding: 0 3px 0 1px;
}
.panel { background: var(--panel); border-right: 1px solid var(--edge); padding-top: 4px; display: flex; flex-direction: column; }
.panel-body { display: flex; height: 66px; }
.panel-body.center { justify-content: center; }
.panel h2 { display: flex; align-items: center; justify-content: center; gap: 6px; height: 19px; padding-top: 3px; position: relative; }
.panel .has-launch { padding-right: 10px; }
.launch { position: absolute; right: 3px; bottom: 3px; }
.launch svg { width: 8px; height: 8px; }

.big { flex-direction: column; flex: none; width: 38px; text-align: center; }
.big.wide { width: 46px; }
.big.narrow { width: 32px; }
.big .ico-lg { margin-bottom: 3px; }
.big .caret { margin-top: 4px; }
.small { height: 22px; gap: 4px; }
.col { margin-left: 5px; }
.col.tight { margin-left: 2px; }
.col .caret { margin-left: 2px; }
.small.on { background: #2f5a78; box-shadow: inset 0 0 0 1px #6fb4d8; height: 20px; padding: 0 3px; margin: 1px -3px; }

.modify { display: grid; grid-template-columns: 55px 55px 66px 16px; padding-left: 5px; }
.modify .small .caret { margin-left: 2px; }

.layers { flex: 1; padding-right: 3px; }
.layers .combo { margin-bottom: 1px; margin-top: 1px; }
.tool-row { display: flex; gap: 6px; padding-left: 3px; }

.props { flex: 1; padding-right: 4px; }
.prop { display: flex; align-items: center; height: 22px; gap: 3px; }
.prop .combo { flex: 1; min-width: 0; }
.prop .swatch { margin: 0 6px 0 8px; }
.prop .line { width: 60px; height: 1px; background: var(--text); }
.prop .line + select { padding: 0 0 0 3px; }

/* DRAWING TABS */
.doc-tabs { display: flex; align-items: flex-end; height: 29px; padding-left: 16px; border-bottom: 4px solid var(--panel); }
.doc-tab {
    width: 116px;
    height: 22px;
    padding: 0 12px;
    display: flex;
    align-items: center;
    justify-content: space-between;
    background: #2e3646;
    color: var(--muted);
    clip-path: polygon(6% 0, 93% 0, 100% 100%, 0 100%);
}
.doc-tab.active { background: var(--panel); color: #fff; }
.doc-tab button { color: var(--muted); font-size: 12px; }
.add-tab { width: 18px; height: 14px; margin: 0 0 4px 8px; justify-content: center; border-radius: 7px; background: #393c43; color: var(--muted); font-size: 15px; }

/* MODEL SPACE */
.workspace { flex: 1; min-height: 0; display: flex; }
.canvas { flex: 1; position: relative; overflow: hidden; background: #000; }
.drawing { position: absolute; inset: 0; width: 100%; height: 100%; }
.minor { stroke: #111315; }
.major { stroke: #212630; }
.crosshair { fill: none; stroke: #dcdcdc; }
.entity { fill: none; stroke: #d8d8d8; }
.label, .label-shadow { font: 71px 'Liberation Sans', sans-serif; }
.label { stroke: #dbe4f2; stroke-width: 1px; }
.label-shadow { fill: #59657b; stroke: #59657b; }

.cube {
    position: absolute;
    top: 19px;
    right: 19px;
    width: 104px;
    height: 104px;
    border: 12px solid #222d3d;
    border-radius: 50%;
    font: 500 16px/16px 'Noto Sans CJK SC', sans-serif;
    color: #a9abad;
}
.cube .face {
    position: absolute;
    inset: 18px;
    justify-content: center;
    background: #a3a4a6;
    color: #4b4e53;
    font: 300 28px/28px 'Noto Sans CJK SC', sans-serif;
}
.cube span { position: absolute; }
.north { top: -16px; left: 32px; }
.south { bottom: -16px; left: 32px; }
.west { top: 31px; left: -16px; }
.east { top: 31px; right: -16px; }
.wcs {
    position: absolute;
    top: 145px;
    right: 49px;
    width: 44px;
    height: 16px;
    padding: 0 3px;
    justify-content: space-between;
    border: 1px solid #6d6e72;
    border-radius: 4px;
    background: #929396;
    color: #505257;
}
.wcs span { font-size: 9px; }

.navbar {
    position: absolute;
    top: 185px;
    right: 3px;
    width: 30px;
    height: 196px;
    padding: 16px 0 14px;
    display: flex;
    flex-direction: column;
    align-items: center;
    justify-content: space-between;
    border-radius: 3px;
    background: #464646;
    opacity: .95;
}
.navbar svg { width: 22px; height: 22px; }
.dot { width: 3px; height: 2px; background: #2f3135; }

.scrollbar { width: 16px; display: flex; flex-direction: column; align-items: center; padding: 3px 0 26px; background: #ededee; border-left: 1px solid #fff; }
.scrollbar svg { width: 10px; height: 10px; }
.thumb { width: 13px; height: 16px; margin-top: auto; background: #c9c9ca; }
```

FILE: script.js
```js
// grid lines: one major line every five minor ones
const STEP = 10.07;
const ORIGIN = { x: 59.5, y: 10.5 };

function drawGrid() {
    const svg = document.getElementById('drawing');
    const w = svg.clientWidth;
    const h = svg.clientHeight;
    let minor = '';
    let major = '';

    for (let i = -5; ORIGIN.x + i * STEP < w; i++) {
        const line = `M${Math.floor(ORIGIN.x + i * STEP) + 0.5} 0V${h}`;
        if (i % 5 === 0) major += line; else minor += line;
    }
    for (let i = -1; ORIGIN.y + i * STEP < h; i++) {
        const line = `M0 ${Math.floor(ORIGIN.y + i * STEP) + 0.5}H${w}`;
        if (i % 5 === 0) major += line; else minor += line;
    }

    document.getElementById('grid').innerHTML =
        `<path class="minor" d="${minor}"/><path class="major" d="${major}"/>`;
}

window.onload = drawGrid;
window.onresize = drawGrid;
```
